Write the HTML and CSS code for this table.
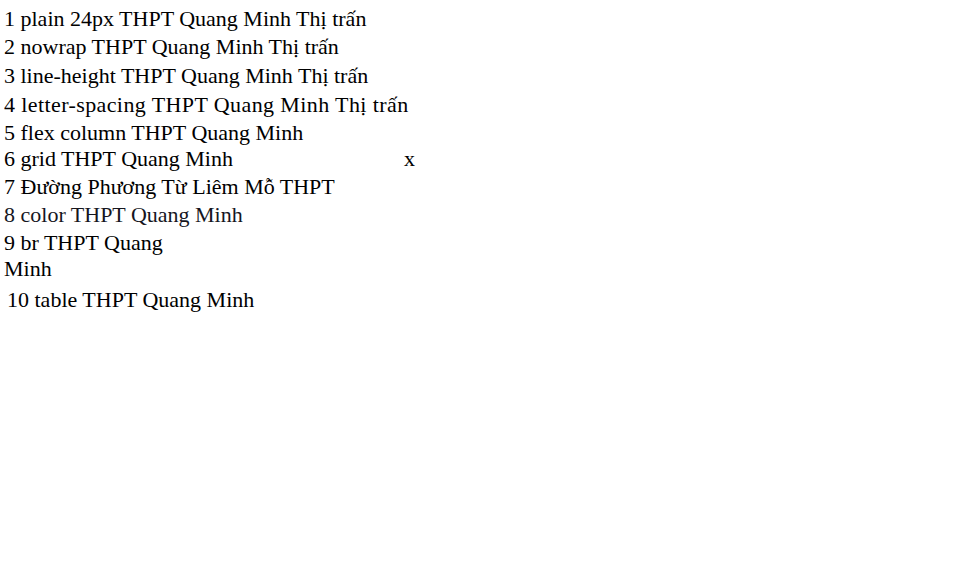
FILE: index.html
```html
<!DOCTYPE html>
<html lang="vi">
<head>
<meta charset="utf-8">
<title>test</title>
<link rel="stylesheet" href="styles.css">
</head>
<body>
<p class="f s1">1 plain 24px THPT Quang Minh Thị trấn</p>
<p class="f s1 nw">2 nowrap THPT Quang Minh Thị trấn</p>
<p class="f s1 lh">3 line-height THPT Quang Minh Thị trấn</p>
<p class="f s1 ls">4 letter-spacing THPT Quang Minh Thị trấn</p>
<div class="f s1 fx"><div>5 flex column THPT Quang Minh</div></div>
<div class="f s1 gr"><div>6 grid THPT Quang Minh</div><div>x</div></div>
<p class="f s1">7 Đường Phương Từ Liêm Mỗ THPT</p>
<p class="f s1 col">8 color THPT Quang Minh</p>
<p class="f s1">9 br THPT Quang<br>Minh</p>
<table class="f s1"><tr><td>10 table THPT Quang Minh</td></tr></table>
</body>
</html>
```
FILE: styles.css
```css
body { margin: 4px; }
p { margin: 2px 0; }
.f { font-family: "Liberation Serif"; }
.s1 { font-size: 22px; }
.nw { white-space: nowrap; }
.lh { line-height: 28px; }
.ls { letter-spacing: 0.4px; }
.fx { display: flex; flex-direction: column; }
.gr { display: grid; grid-template-columns: 400px 50px; }
.col { color: #16161e; }
```
